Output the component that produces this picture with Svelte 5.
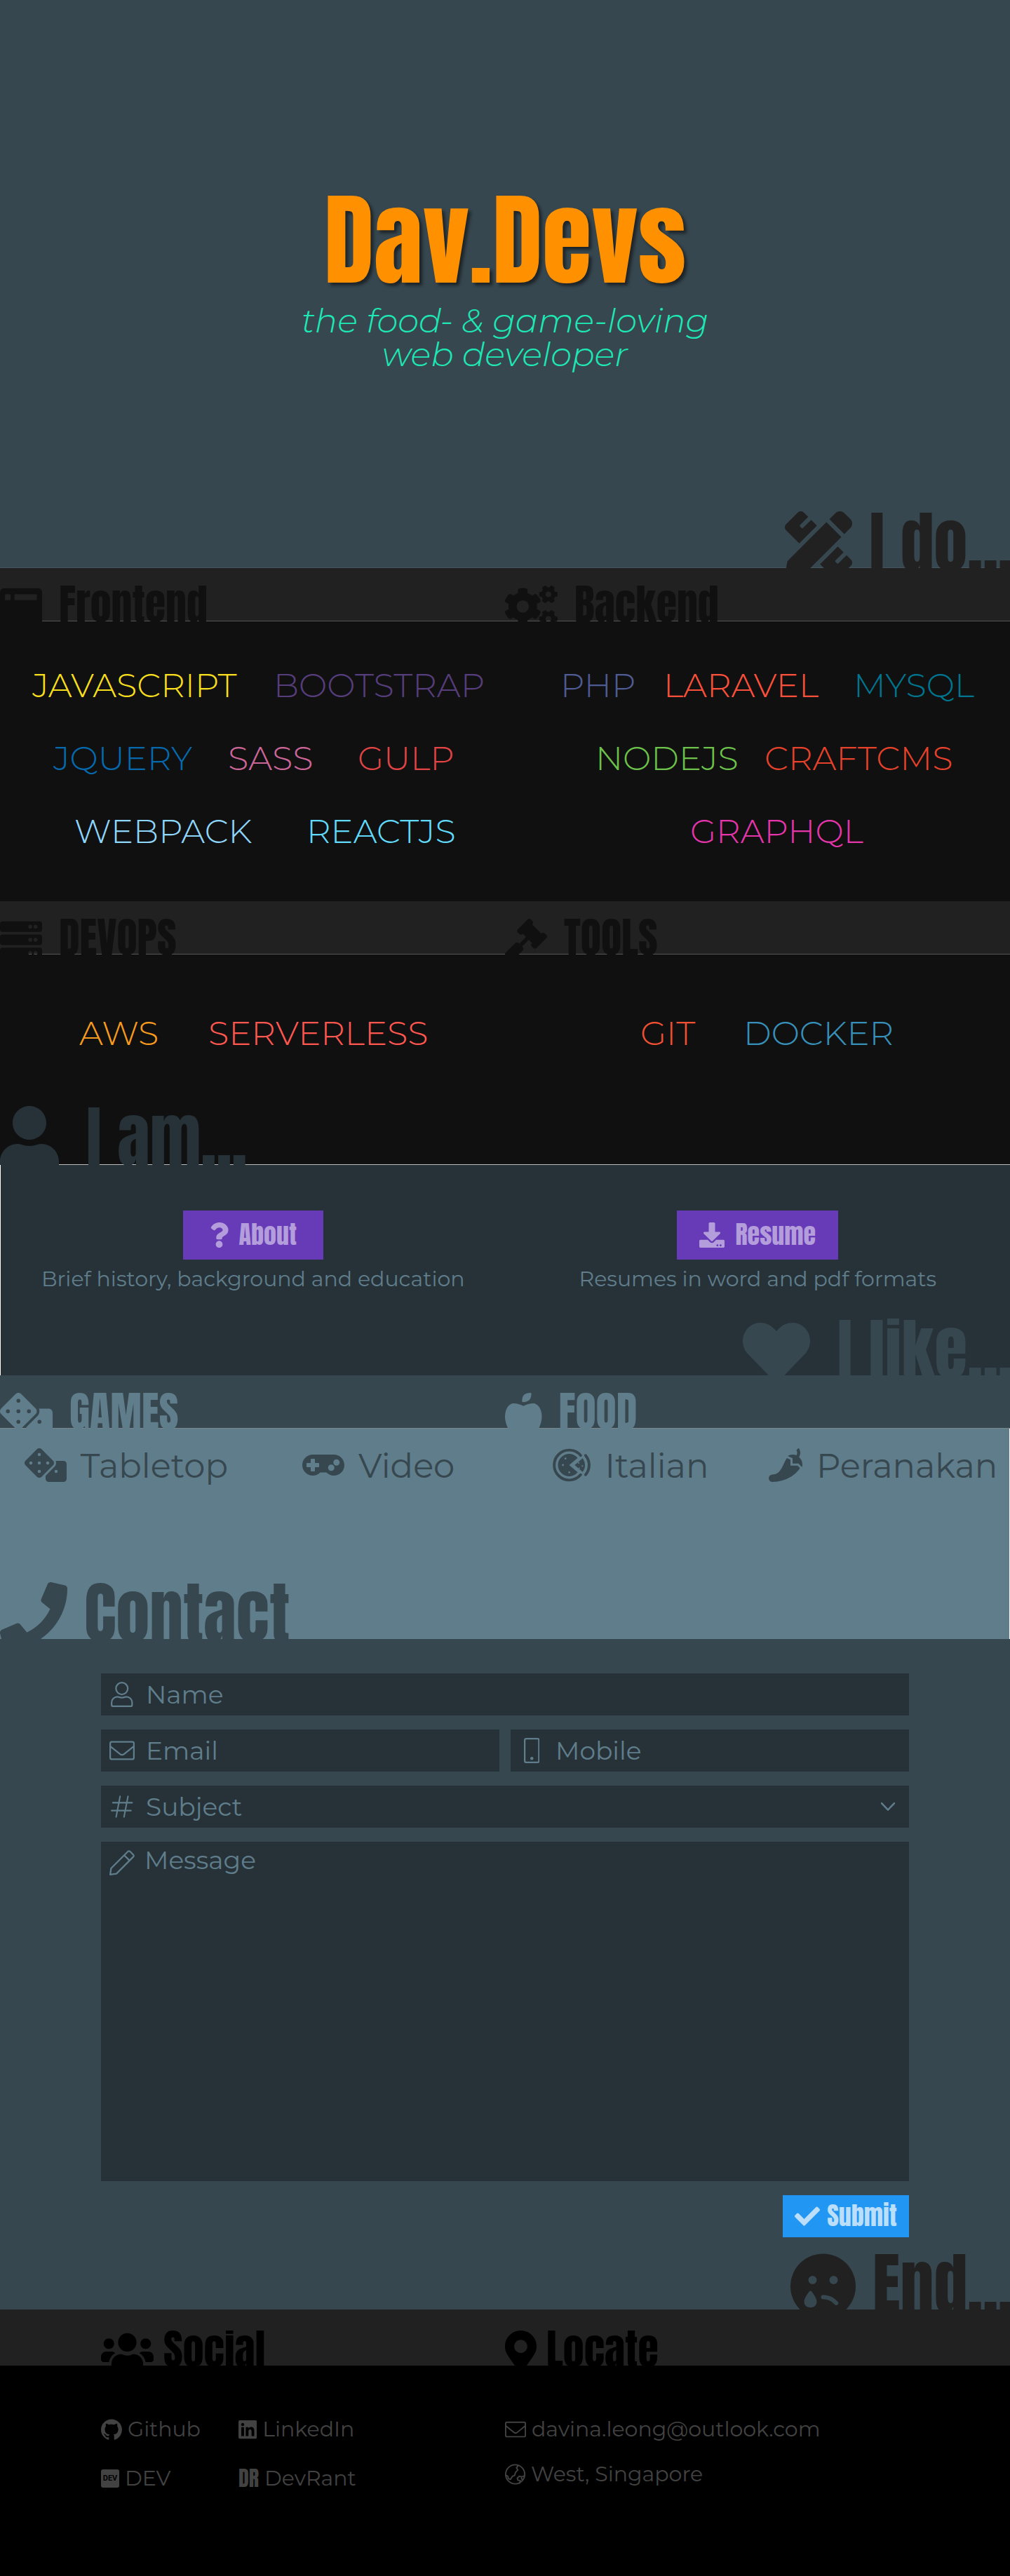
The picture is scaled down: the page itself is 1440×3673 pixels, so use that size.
<script>
  const dot = (x, y, r) => `M${x - r} ${y}a${r} ${r} 0 1 0 ${2 * r} 0a${r} ${r} 0 1 0 ${-2 * r} 0`;

  const smallCog =
    'l-8.2 14.3c-3 5.3-9.4 7.5-15.1 5.4-11.8-4.4-22.6-10.7-32.1-18.6-4.6-3.8-5.8-10.5-2.8-15.7l8.2-14.3c-6.9-8-12.3-17.3-15.9-27.4h-16.5c-6 0-11.2-4.3-12.2-10.3-2-12-2.1-24.6 0-37.1 1-6 6.2-10.4 12.2-10.4h16.5c3.6-10.1 9-19.4 15.9-27.4l-8.2-14.3c-3-5.2-1.9-11.9 2.8-15.7 9.5-7.9 20.4-14.2 32.1-18.6 5.7-2.1 12.1.1 15.1 5.4l8.2 14.3c10.5-1.9 21.2-1.9 31.7 0l8.2-14.3c3-5.3 9.4-7.5 15.1-5.4 11.8 4.4 22.6 10.7 32.1 18.6 4.6 3.8 5.8 10.5 2.8 15.7l-8.2 14.3c6.9 8 12.3 17.3 15.9 27.4h16.5c6 0 11.2 4.3 12.2 10.3 2 12 2.1 24.6 0 37.1-1 6-6.2 10.4-12.2 10.4h-16.5c-3.6 10.1-9 19.4-15.9 27.4l8.2 14.3c3 5.2 1.9 11.9-2.8 15.7-9.5 7.9-20.4 14.2-32.1 18.6-5.7 2.1-12.1-.1-15.1-5.4l-8.2-14.3c-10.4 1.9-21.2 1.9-31.7 0z';

  const rack = (y) =>
    `M32 ${y}h448a32 32 0 0 1 32 32v64a32 32 0 0 1-32 32H32a32 32 0 0 1-32-32v-64a32 32 0 0 1 32-32z${dot(368, y + 64, 24)}${dot(432, y + 64, 24)}`;

  const icons = {
    tools: { w: 512, fill: 'M109.46 244.04l134.58-134.56-44.12-44.12-61.68 61.68a7.919 7.919 0 0 1-11.21 0l-11.21-11.21c-3.1-3.1-3.1-8.12 0-11.21l61.68-61.68-33.64-33.65C131.47-3.1 111.39-3.1 99 9.29L9.29 99c-12.38 12.39-12.39 32.47 0 44.86l100.17 100.18zm388.47-116.8c18.76-18.76 18.75-49.17 0-67.93l-45.25-45.25c-18.76-18.76-49.18-18.76-67.95 0l-46.02 46.01 113.2 113.2 46.02-46.03zM316.08 82.71l-297 296.96L.32 487.11c-2.53 14.49 10.09 27.11 24.59 24.56l107.45-18.84L429.28 195.9 316.08 82.71zm186.63 285.43l-33.64-33.64-61.68 61.68c-3.1 3.1-8.12 3.1-11.21 0l-11.21-11.21c-3.09-3.1-3.09-8.12 0-11.21l61.68-61.68-44.14-44.14L267.93 402.5l100.21 100.2c12.39 12.39 32.47 12.39 44.86 0l89.71-89.7c12.39-12.39 12.39-32.47 0-44.86z' },
    window: { w: 512, fill: 'M48 32h416a48 48 0 0 1 48 48v352a48 48 0 0 1-48 48H48a48 48 0 0 1-48-48V80a48 48 0 0 1 48-48zM70 104a10 10 0 0 0-10 10v52a10 10 0 0 0 10 10h50a10 10 0 0 0 10-10v-52a10 10 0 0 0-10-10zM186 104a10 10 0 0 0-10 10v52a10 10 0 0 0 10 10h252a10 10 0 0 0 10-10v-52a10 10 0 0 0-10-10z' },
    cogs: { w: 640, fill: `M512.1 191${smallCog}${dot(528, 106, 34)}M512.1 490${smallCog}${dot(528, 405, 34)}M386.3 286.1l33.7 16.8c10.1 5.8 14.5 18.1 10.5 29.1-8.9 24.2-26.4 46.4-42.6 65.8-7.4 8.9-20.2 11.1-30.3 5.3l-29.1-16.8c-16 13.7-34.6 24.6-54.9 31.7v33.6c0 11.6-8.3 21.6-19.7 23.6-24.6 4.2-50.4 4.4-75.9 0-11.5-2-20-11.9-20-23.6V418c-20.3-7.2-38.9-18-54.9-31.7L74 403c-10 5.8-22.9 3.6-30.3-5.3-16.2-19.4-33.3-41.6-42.2-65.7-4-10.9.4-23.2 10.5-29.1l33.3-16.8c-3.9-20.9-3.9-42.4 0-63.4L12 205.8c-10.1-5.8-14.6-18.1-10.5-29 8.9-24.2 26-46.4 42.2-65.8 7.4-8.9 20.2-11.1 30.3-5.3l29.1 16.8c16-13.7 34.6-24.6 54.9-31.7V57.1c0-11.5 8.2-21.5 19.6-23.5 24.6-4.2 50.5-4.4 76-.1 11.5 2 20 11.9 20 23.6v33.6c20.3 7.2 38.9 18 54.9 31.7l29.1-16.8c10-5.8 22.9-3.6 30.3 5.3 16.2 19.4 33.2 41.6 42.1 65.8 4 10.9.1 23.2-10 29.1l-33.7 16.8c3.9 21 3.9 42.5 0 63.5z${dot(216, 254, 75)}` },
    server: { w: 512, fill: rack(32) + rack(192) + rack(352) },
    gavel: { w: 512, fill: 'M504.971 199.362l-22.627-22.627c-9.373-9.373-24.569-9.373-33.941 0l-5.657 5.657L329.608 69.255l5.657-5.657c9.373-9.373 9.373-24.569 0-33.941L312.638 7.029c-9.373-9.373-24.569-9.373-33.941 0L154.246 131.48c-9.373 9.373-9.373 24.569 0 33.941l22.627 22.627c9.373 9.373 24.569 9.373 33.941 0l5.657-5.657 39.598 39.598-81.04 81.04-5.657-5.657c-12.497-12.497-32.758-12.497-45.255 0L9.373 412.118c-12.497 12.497-12.497 32.758 0 45.255l45.255 45.255c12.497 12.497 32.758 12.497 45.255 0l114.745-114.745c12.497-12.497 12.497-32.758 0-45.255l-5.657-5.657 81.04-81.04 39.598 39.598-5.657 5.657c-9.373 9.373-9.373 24.569 0 33.941l22.627 22.627c9.373 9.373 24.569 9.373 33.941 0l124.451-124.451c9.372-9.372 9.372-24.568 0-33.941z' },
    user: { w: 448, fill: 'M224 256c70.7 0 128-57.3 128-128S294.7 0 224 0 96 57.3 96 128s57.3 128 128 128zM313.6 288c-28.7 0-42.5 16-89.6 16-47.1 0-60.8-16-89.6-16C60.2 288 0 348.2 0 422.4V464c0 26.5 21.5 48 48 48h352c26.5 0 48-21.5 48-48v-41.6c0-74.2-60.2-134.4-134.4-134.4z' },
    heart: { w: 512, fill: 'M462.3 62.6C407.5 15.9 326 24.3 275.7 76.2L256 96.5l-19.7-20.3C186.1 24.3 104.5 15.9 49.7 62.6c-62.8 53.6-66.1 149.8-9.9 207.9l193.5 199.8c12.5 12.9 32.8 12.9 45.3 0l193.5-199.8c56.3-58.1 53-154.3-9.8-207.9z' },
    dice: { w: 640, fill: `M592 192H473.26c12.69 29.59 7.12 65.2-17 89.32L320 417.58V464c0 26.51 21.49 48 48 48h224c26.51 0 48-21.49 48-48V240c0-26.51-21.49-48-48-48z${dot(480, 352, 24)}M433.63 189.3L258.7 14.37c-19.16-19.16-50.23-19.16-69.39 0L14.37 189.3c-19.16 19.16-19.16 50.23 0 69.39L189.3 433.63c19.16 19.16 50.23 19.16 69.39 0L433.63 258.7c19.16-19.17 19.16-50.24 0-69.4z${dot(96, 224, 24)}${dot(224, 352, 24)}${dot(224, 224, 24)}${dot(224, 96, 24)}${dot(352, 224, 24)}` },
    apple: { w: 448, fill: 'M350.85 129c25.97 4.67 47.27 18.67 63.92 42 14.65 20.67 24.64 46.67 29.96 78 4.67 28.67 4.32 57.33-1 86-7.99 47.33-23.97 87-47.94 119-28.64 38.67-64.59 58-107.87 58-10.66 0-22.3-3.33-34.96-10-8.66-5.33-18.31-8-28.97-8s-20.3 2.67-28.97 8c-12.66 6.67-24.3 10-34.96 10-43.28 0-79.23-19.33-107.87-58-23.97-32-39.95-71.67-47.94-119-5.32-28.67-5.67-57.33-1-86 5.32-31.33 15.31-57.33 29.96-78 16.65-23.33 37.95-37.33 63.92-42 15.98-2.67 37.95-.33 65.92 7 23.97 6.67 44.28 14.67 60.93 24 16.65-9.33 36.96-17.33 60.93-24 27.98-7.33 49.96-9.67 65.94-7zm-54.94-41c-9.32 8.67-21.65 15-36.96 19-10.66 3.33-22.3 5-34.96 5l-14.98-1c-1.33-9.33-1.33-20 0-32 2.67-24 10.32-42.33 22.97-55 9.32-8.67 21.65-15 36.96-19 10.66-3.33 22.3-5 34.96-5l14.98 1 1 15c0 12.67-1.67 24.33-4.99 35-3.99 15.33-10.31 27.67-18.98 37z' },
    question: { w: 384, fill: 'M202.021 0C122.202 0 70.503 32.703 29.914 91.026c-7.363 10.58-5.093 25.086 5.178 32.874l43.138 32.709c10.373 7.865 25.132 6.026 33.253-4.148 25.049-31.381 43.63-49.449 82.757-49.449 30.764 0 68.816 19.799 68.816 49.631 0 22.552-18.617 34.134-48.993 51.164-35.423 19.86-82.299 44.576-82.299 106.405V320c0 13.255 10.745 24 24 24h72.471c13.255 0 24-10.745 24-24v-5.773c0-42.86 125.268-44.645 125.268-160.627C377.504 66.256 286.902 0 202.021 0zM192 373.459c-38.196 0-69.271 31.075-69.271 69.271 0 38.195 31.075 69.27 69.271 69.27s69.271-31.075 69.271-69.271-31.075-69.27-69.271-69.27z' },
    download: { w: 512, fill: 'M216 0h80c13.3 0 24 10.7 24 24v168h87.7c17.8 0 26.7 21.5 14.1 34.1L269.7 378.3c-7.5 7.5-19.8 7.5-27.3 0L90.1 226.1c-12.6-12.6-3.7-34.1 14.1-34.1H192V24c0-13.3 10.7-24 24-24zm296 376v112c0 13.3-10.7 24-24 24H24c-13.3 0-24-10.7-24-24V376c0-13.3 10.7-24 24-24h146.7l49 49c20.1 20.1 52.5 20.1 72.6 0l49-49H488c13.3 0 24 10.7 24 24zm-124 88c0-11-9-20-20-20s-20 9-20 20 9 20 20 20 20-9 20-20zm64 0c0-11-9-20-20-20s-20 9-20 20 9 20 20 20 20-9 20-20z' },
    gamepad: { w: 640, fill: 'M480 96H160C71.6 96 0 167.6 0 256s71.6 160 160 160c44.8 0 85.2-18.4 114.2-48h91.5c29 29.6 69.5 48 114.2 48 88.4 0 160-71.6 160-160S568.4 96 480 96zM256 276c0 6.6-5.4 12-12 12h-52v52c0 6.6-5.4 12-12 12h-40c-6.6 0-12-5.4-12-12v-52H76c-6.6 0-12-5.4-12-12v-40c0-6.6 5.4-12 12-12h52v-52c0-6.6 5.4-12 12-12h40c6.6 0 12 5.4 12 12v52h52c6.6 0 12 5.4 12 12v40zm184 68c-26.5 0-48-21.5-48-48s21.5-48 48-48 48 21.5 48 48-21.5 48-48 48zm80-80c-26.5 0-48-21.5-48-48s21.5-48 48-48 48 21.5 48 48-21.5 48-48 48z' },
    pizza: { w: 576, sw: 42, fill: `M250 256L380 147A170 170 0 1 0 380 365Z${dot(194, 156, 15)}${dot(156, 256, 15)}${dot(252, 366, 15)}M335 256L455 151A170 170 0 0 1 455 361Z${dot(396, 222, 12)}${dot(452, 270, 12)}${dot(402, 306, 12)}`, line: 'M425 109A228 228 0 1 0 425 403M500 109A228 228 0 0 1 500 403' },
    pepper: { w: 512, fill: 'M330.67 263.12V173.4l-52.75-24.22C219.44 218.76 197.58 400 56 400a56 56 0 0 0 0 112c212.64 0 370.65-122.87 419.18-210.34l-37.05-38.54zm131.09-128.37C493.92 74.91 477.18 26.48 458.62 3a8 8 0 0 0-11.93-.59l-22.9 23a8.06 8.06 0 0 0-.89 10.23c6.86 10.36 17.05 35.1-1.4 72.32A142.85 142.85 0 0 0 364.34 96c-28 0-54 8.54-76.34 22.59l74.67 34.29v78.24h89.09L506.44 288c3.26-12.62 5.56-25.63 5.56-39.31a154 154 0 0 0-50.24-113.94z' },
    phone: { w: 512, fill: 'M493.4 24.6l-104-24c-11.3-2.6-22.9 3.3-27.5 13.9l-48 112c-4.2 9.8-1.4 21.3 6.9 28l60.6 49.6c-36 76.7-98.9 140.5-177.2 177.2l-49.6-60.6c-6.8-8.3-18.2-11.1-28-6.9l-112 48C3.9 366.5-2 378.1.6 389.4l24 104C27.1 504.2 36.7 512 48 512c256.1 0 464-207.5 464-464 0-11.2-7.7-20.9-18.6-23.4z' },
    check: { w: 512, fill: 'M173.898 439.404l-166.4-166.4c-9.997-9.997-9.997-26.206 0-36.204l36.203-36.204c9.997-9.998 26.207-9.998 36.204 0L192 312.69 432.095 72.596c9.997-9.997 26.207-9.997 36.204 0l36.203 36.204c9.997 9.997 9.997 26.206 0 36.204l-294.4 294.401c-9.998 9.997-26.207 9.997-36.204-.001z' },
    sad: { w: 496, fill: `${dot(248, 256, 248)}${dot(168, 208, 32)}${dot(328, 208, 32)}M152 291c-5 0-9 3-12 8-14 20-36 50-36 74 0 25 21 44 48 44s48-19 48-44c0-24-22-54-36-74-3-5-7-8-12-8zM248 321a16 16 0 0 0 0 32c34 0 66 15 88 41 14 16 38-4 25-20-28-34-69-53-113-53z` },
    users: { w: 640, fill: 'M96 224c35.3 0 64-28.7 64-64s-28.7-64-64-64-64 28.7-64 64 28.7 64 64 64zm448 0c35.3 0 64-28.7 64-64s-28.7-64-64-64-64 28.7-64 64 28.7 64 64 64zm32 32h-64c-17.6 0-33.5 7.1-45.1 18.6 40.3 22.1 68.9 62 75.1 109.4h66c17.7 0 32-14.3 32-32v-32c0-35.3-28.7-64-64-64zm-256 0c61.9 0 112-50.1 112-112S381.9 32 320 32 208 82.1 208 144s50.1 112 112 112zm76.8 32h-8.3c-20.8 10-43.9 16-68.5 16s-47.6-6-68.5-16h-8.3C179.6 288 128 339.6 128 403.2V432c0 26.5 21.5 48 48 48h288c26.5 0 48-21.5 48-48v-28.8c0-63.6-51.6-115.2-115.2-115.2zm-223.7-13.4C161.5 263.1 145.6 256 128 256H64c-35.3 0-64 28.7-64 64v32c0 17.7 14.3 32 32 32h65.9c6.3-47.4 34.9-87.3 75.2-109.4z' },
    marker: { w: 384, fill: 'M172.268 501.67C26.97 291.031 0 269.413 0 192 0 85.961 85.961 0 192 0s192 85.961 192 192c0 77.413-26.97 99.031-172.268 309.67-9.535 13.774-29.93 13.773-39.464 0zM192 272c44.183 0 80-35.817 80-80s-35.817-80-80-80-80 35.817-80 80 35.817 80 80 80z' },
    github: { w: 512, fill: 'M256 8C114.600 8 0 122.600 0 264c0 113.300 73.300 209 175 242.900 12.800 2.200 17.600-5.400 17.600-12.200 0-6.100-.3-26.200-.3-47.700-64.300 11.800-81-15.700-86.100-30.100-2.900-7.400-15.400-30.100-26.200-36.200-9-4.800-21.800-16.600-.3-17 20.200-.3 34.600 18.600 39.400 26.200 23 38.700 59.800 27.800 74.600 21.100 2.200-16.600 9-27.800 16.300-34.200-57-6.400-116.500-28.500-116.500-126.400 0-27.800 9.900-50.900 26.200-68.800-2.600-6.400-11.500-32.600 2.600-67.800 0 0 21.400-6.700 70.400 26.200 20.500-5.800 42.200-8.600 64-8.600s43.500 2.900 64 8.600c49-33.300 70.400-26.200 70.400-26.200 14.100 35.200 5.100 61.400 2.600 67.800 16.300 17.900 26.200 40.600 26.200 68.800 0 98.200-59.800 120-116.800 126.400 9.300 8 17.300 23.400 17.300 47.400 0 34.200-.3 61.800-.3 70.400 0 6.700 4.800 14.700 17.600 12.200A256 256 0 0 0 512 264C512 122.600 397.400 8 256 8z' },
    linkedin: { w: 448, fill: 'M416 32H31.9C14.3 32 0 46.5 0 64.3v383.4C0 465.5 14.3 480 31.9 480H416c17.6 0 32-14.5 32-32.3V64.3c0-17.8-14.4-32.3-32-32.3zM135.4 416H69V202.2h66.5V416zm-33.2-243c-21.3 0-38.5-17.3-38.5-38.5S80.9 96 102.2 96c21.2 0 38.5 17.3 38.5 38.5 0 21.3-17.2 38.5-38.5 38.5zm282.1 243h-66.4V312c0-24.8-.5-56.7-34.5-56.7-34.6 0-39.9 27-39.9 54.9V416h-66.4V202.2h63.7v29.2h.9c8.9-16.8 30.6-34.5 62.9-34.5 67.2 0 79.7 44.3 79.7 101.9V416z' },
    userLine: { w: 448, sw: 32, line: `${dot(224, 136, 120)}M313.600 304c-28 0-42 16-89.600 16s-61-16-89.600-16C69 304 16 357 16 422V464a32 32 0 0 0 32 32h352a32 32 0 0 0 32-32v-42c0-65-53-118-118.400-118z` },
    mail: { w: 512, sw: 32, line: 'M48 80h416a32 32 0 0 1 32 32v288a32 32 0 0 1-32 32H48a32 32 0 0 1-32-32V112a32 32 0 0 1 32-32zM16 168l196 158q44 36 88 0l196-158' },
    mobile: { w: 320, sw: 32, line: 'M48 16h224a32 32 0 0 1 32 32v416a32 32 0 0 1-32 32H48a32 32 0 0 1-32-32V48a32 32 0 0 1 32-32z', fill: dot(160, 416, 32) },
    hash: { w: 448, sw: 30, line: 'M188 48L108 464M348 48L268 464M40 176H432M16 336H408' },
    pencil: { w: 512, sw: 32, line: 'M34 370L375 29q22-22 44 0l64 64q22 22 0 44L142 478L16 496ZM300 104l108 108' },
    chevron: { w: 512, sw: 64, line: 'M24 130L256 374L488 130' },
    globe: { w: 496, sw: 32, line: `${dot(248, 256, 232)}M320 40l-40 60 30 50-55 60-20 70-60 30-40 70-50-20-20-60-60-30M300 350l50-50 60 20 40-20M300 350l10 50 60 10-10 60M400 350l20 40` }
  };

  // Each tag is [label, colour, start], with start measured along a track of 720 units.
  const frontend = [
    [['JAVASCRIPT', '#f7df1e', 46], ['BOOTSTRAP', '#563d7c', 390]],
    [['JQUERY', '#0769ad', 76], ['SASS', '#cc6699', 325], ['GULP', '#e04444', 510]],
    [['WEBPACK', '#8ed6fb', 106], ['REACTJS', '#61dafb', 437]]
  ];
  const backend = [
    [['PHP', '#4f5b93', 79], ['LARAVEL', '#fb503b', 226], ['MYSQL', '#00758f', 497]],
    [['NODEJS', '#6cc24a', 129], ['CRAFTCMS', '#e5422b', 370]],
    [['GRAPHQL', '#e535ab', 264]]
  ];
  const devops = [[['AWS', '#f79b1f', 113], ['SERVERLESS', '#fd5750', 297]]];
  const tools = [[['GIT', '#f05033', 193], ['DOCKER', '#3790b9', 340]]];

  const columns = (row) =>
    [...row.map((tag) => tag[2]), 720].map((at, i, all) => `minmax(0, ${at - (i ? all[i - 1] : 0)}fr)`).join(' ');

  const likes = [['dice', 'Tabletop'], ['gamepad', 'Video'], ['pizza', 'Italian'], ['pepper', 'Peranakan']];
</script>

{#snippet icon(name)}
  {@const art = icons[name]}
  <svg class="icon" viewBox="0 0 {art.w} 512" aria-hidden="true">
    {#if art.fill}<path fill="currentColor" fill-rule="evenodd" d={art.fill} />{/if}
    {#if art.line}
      <path fill="none" stroke="currentColor" stroke-width={art.sw} stroke-linecap="round" stroke-linejoin="round" d={art.line} />
    {/if}
  </svg>
{/snippet}

{#snippet cloud(rows)}
  <div class="cloud">
    {#each rows as row}
      <div class="cloud-row" style:grid-template-columns={columns(row)}>
        <span></span>
        {#each row as [label, colour]}
          <span class="tag" style:color={colour}>{label}</span>
        {/each}
      </div>
    {/each}
  </div>
{/snippet}

<main>
  <section class="hero">
    <div class="brand">
      <h1>Dav.Devs</h1>
      <p>the food- &amp; game-loving<br />web developer</p>
    </div>
    <h2 class="big right ink-dark">{@render icon('tools')}<span>I do...</span></h2>
  </section>

  <section>
    <div class="strip dark">
      <h3>{@render icon('window')}<span>Frontend</span></h3>
      <h3>{@render icon('cogs')}<span>Backend</span></h3>
    </div>
    <div class="panel skills">
      {@render cloud(frontend)}
      {@render cloud(backend)}
    </div>
    <div class="strip dark">
      <h3>{@render icon('server')}<span>DEVOPS</span></h3>
      <h3>{@render icon('gavel')}<span>TOOLS</span></h3>
    </div>
    <div class="panel-end">
      <div class="panel ops">
        {@render cloud(devops)}
        {@render cloud(tools)}
      </div>
      <h2 class="big wide ink-night">{@render icon('user')}<span>I am...</span></h2>
    </div>
  </section>

  <section class="about">
    <div class="panel">
      <div class="offer">
        <button class="btn violet" type="button">{@render icon('question')}<span>About</span></button>
        <p>Brief history, background and education</p>
      </div>
      <div class="offer">
        <button class="btn violet" type="button">{@render icon('download')}<span>Resume</span></button>
        <p>Resumes in word and pdf formats</p>
      </div>
    </div>
    <h2 class="big wide right ink-slate">{@render icon('heart')}<span>I like...</span></h2>
  </section>

  <div class="strip slate">
    <h3>{@render icon('dice')}<span>GAMES</span></h3>
    <h3>{@render icon('apple')}<span>FOOD</span></h3>
  </div>
  <section class="likes">
    <ul>
      {#each likes as [name, label]}
        <li>{@render icon(name)}<span>{label}</span></li>
      {/each}
    </ul>
    <h2 class="big ink-slate">{@render icon('phone')}<span>Contact</span></h2>
  </section>

  <section class="contact">
    <form onsubmit={(event) => event.preventDefault()}>
      <label class="field full"><span class="mark">{@render icon('userLine')}</span><input type="text" placeholder="Name" aria-label="Name" /></label>
      <label class="field"><span class="mark">{@render icon('mail')}</span><input type="email" placeholder="Email" aria-label="Email" /></label>
      <label class="field"><span class="mark">{@render icon('mobile')}</span><input type="tel" placeholder="Mobile" aria-label="Mobile" /></label>
      <label class="field full">
        <span class="mark">{@render icon('hash')}</span>
        <select aria-label="Subject"><option>Subject</option></select>
        <span class="caret">{@render icon('chevron')}</span>
      </label>
      <label class="field full tall"><span class="mark">{@render icon('pencil')}</span><textarea placeholder="Message" aria-label="Message"></textarea></label>
      <button class="btn blue" type="submit">{@render icon('check')}<span>Submit</span></button>
    </form>
    <h2 class="big right ink-dark">{@render icon('sad')}<span>End...</span></h2>
  </section>
</main>

<footer>
  <div class="strip foot">
    <h3>{@render icon('users')}<span>Social</span></h3>
    <h3>{@render icon('marker')}<span>Locate</span></h3>
  </div>
  <div class="links">
    <div class="social">
      <a href="#github">{@render icon('github')}<span>Github</span></a>
      <a href="#linkedin">{@render icon('linkedin')}<span>LinkedIn</span></a>
      <a href="#dev"><b class="dev">DEV</b><span>DEV</span></a>
      <a href="#devrant"><b class="rant">DR</b><span>DevRant</span></a>
    </div>
    <div class="locate">
      <a href="#mail">{@render icon('mail')}<span>davina.leong@outlook.com</span></a>
      <a href="#map">{@render icon('globe')}<span>West, Singapore</span></a>
    </div>
  </div>
</footer>

<style>
  :global(body) {
    margin: 0;
    background: #37474f;
    font-family: Montserrat, Inter, 'Open Sans', sans-serif;
    font-weight: 400;
  }
  h1, h2, h3, p, ul { margin: 0; padding: 0; }
  h1, h2, h3, .btn, .rant {
    font-family: Anton, 'Liberation Sans Narrow', 'Open Sans Condensed', sans-serif;
    font-weight: 400;
  }
  .icon { display: block; flex: none; height: 1em; width: auto; }

  .hero {
    display: flex;
    flex-direction: column;
    justify-content: space-between;
    min-height: 810px;
    box-sizing: border-box;
    padding-top: 270px;
    text-align: center;
    box-shadow: inset 0 -1px #46555c;
  }
  .hero h1 {
    color: #ff9100;
    font-size: 144px;
    line-height: 144px;
    text-shadow: 4px 4px 4px rgba(0, 0, 0, 0.5);
  }
  .hero p {
    margin-top: 19px;
    color: #1de9b6;
    font-size: 48px;
    line-height: 48px;
    font-style: italic;
    font-weight: 300;
  }

  .big {
    display: flex;
    gap: 24px;
    height: 81px;
    overflow: hidden;
    font-size: 96px;
    line-height: 87px;
    white-space: nowrap;
  }
  .big.wide { gap: 39px; }
  .big.right { justify-content: flex-end; }
  .big.right span { margin-right: -5px; }
  .ink-dark { color: #212121; }
  .ink-night { color: #263238; height: 84px; }
  .ink-slate { color: #37474f; }

  .strip {
    display: grid;
    grid-template-columns: 1fr 1fr;
    padding-top: 25px;
  }
  .strip h3 {
    display: flex;
    gap: 24px;
    height: 51px;
    overflow: hidden;
    font-size: 60px;
    line-height: 53px;
  }
  .dark { background: #212121; color: #101010; box-shadow: inset 0 -1px #555; }
  .slate { background: #37474f; color: #607d8b; box-shadow: inset 0 -1px #78868c; }

  .panel { display: grid; grid-template-columns: 1fr 1fr; }
  .skills { background: #101010; min-height: 399px; align-items: start; }
  .cloud { padding-top: 55px; }
  .cloud-row { display: grid; height: 104px; }
  .tag {
    font-size: 48px;
    line-height: 72px;
    font-weight: 300;
    white-space: nowrap;
  }
  .panel-end {
    display: flex;
    flex-direction: column;
    justify-content: space-between;
    min-height: 300px;
    background: #101010;
    box-shadow: inset 0 -1px #bbb;
  }
  .ops { height: 180px; }
  .ops .cloud { padding-top: 76px; }

  .about {
    display: flex;
    flex-direction: column;
    justify-content: space-between;
    min-height: 300px;
    background: #263238;
    border-left: 1px solid #fff;
  }
  .about .panel { padding-top: 65px; }
  .offer { text-align: center; color: #607d8b; }
  .offer p { margin-top: 8px; font-size: 30px; line-height: 40px; }
  .btn {
    display: inline-flex;
    align-items: center;
    justify-content: center;
    border: 0;
    font-size: 36px;
    line-height: 36px;
    cursor: pointer;
  }
  .btn span { padding-bottom: 2px; }
  .violet { gap: 15px; min-width: 200px; height: 70px; padding: 0 32px; background: #673ab7; color: #b39ddb; }
  .blue { gap: 10px; height: 60px; min-width: 180px; padding: 0 16px; background: #2196f3; color: #bbdefb; }

  .likes {
    display: flex;
    flex-direction: column;
    justify-content: space-between;
    min-height: 300px;
    background: #607d8b;
    border-right: 1px solid #fff;
  }
  .likes ul {
    display: grid;
    grid-template-columns: repeat(4, 1fr);
    padding-top: 28px;
    list-style: none;
    color: #37474f;
    font-size: 48px;
    line-height: 50px;
  }
  .likes li { display: flex; justify-content: center; gap: 20px; }

  .contact {
    display: flex;
    flex-direction: column;
    justify-content: space-between;
    min-height: 956px;
    box-sizing: border-box;
    padding-top: 49px;
  }
  form {
    display: grid;
    grid-template-columns: 1fr 1fr;
    gap: 20px 16px;
    margin: 0 10%;
  }
  .field {
    display: flex;
    align-items: center;
    height: 60px;
    background: #263238;
    color: #607d8b;
    font-size: 36px;
  }
  .full { grid-column: 1 / -1; }
  .tall { height: 484px; align-items: stretch; }
  .mark { display: flex; justify-content: center; width: 60px; flex: none; }
  .tall .mark { padding-top: 12px; }
  .caret { display: flex; font-size: 20px; padding-right: 20px; }
  input, select, textarea {
    flex: 1;
    min-width: 0;
    height: 100%;
    box-sizing: border-box;
    margin: 0;
    padding: 0 0 0 4px;
    border: 0;
    outline: 0;
    border-radius: 0;
    background: transparent;
    color: #607d8b;
    font: inherit;
    appearance: none;
    resize: none;
  }
  textarea { padding: 4px 0 0 2px; line-height: 44px; }
  ::placeholder { color: #607d8b; opacity: 1; }
  form .blue { grid-column: 2; justify-self: end; }

  .foot { background: #212121; color: #000; padding: 30px 10% 0; }
  .foot h3 { gap: 14px; height: 50px; }
  .links {
    display: grid;
    grid-template-columns: 1fr 1fr;
    align-items: start;
    min-height: 300px;
    box-sizing: border-box;
    padding: 71px 10% 0;
    background: #000;
    font-size: 30px;
    line-height: 40px;
  }
  .social { display: grid; grid-template-columns: max-content max-content; gap: 30px 54px; }
  .locate { display: grid; gap: 24px; }
  .links a { display: flex; align-items: center; gap: 8px; color: #424242; text-decoration: none; }
  .dev {
    display: grid;
    place-items: center;
    width: 26px;
    height: 26px;
    border-radius: 3px;
    background: #424242;
    color: #000;
    font-family: Roboto, sans-serif;
    font-size: 11px;
    font-weight: 700;
    line-height: 26px;
  }
  .rant { font-size: 30px; line-height: 40px; }
</style>
